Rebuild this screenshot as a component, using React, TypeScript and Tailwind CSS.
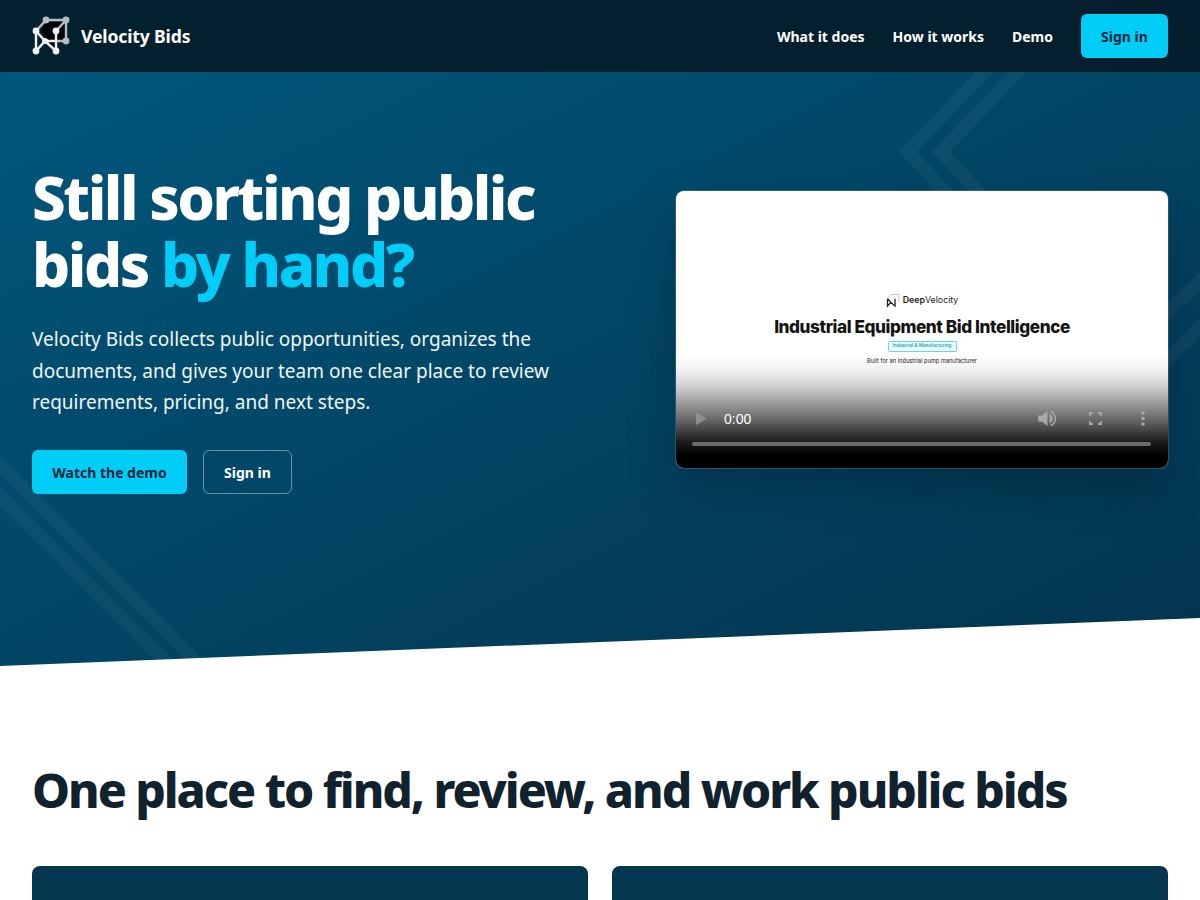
import React from "react";

const font = { fontFamily: '"Noto Sans", sans-serif' };

function Logo() {
  return (
    <svg width="40" height="40" viewBox="0 0 40 40" className="shrink-0">
      <path d="M13 6H33V25H24V35L13 26L10 14Z" fill="#000" />
      <g stroke="#b4bcc0" strokeWidth="2.4" fill="none">
        <path d="M14 4H34V25H24M4 15L14 4M34 4L24 15" />
      </g>
      <g stroke="#eef2f4" strokeWidth="2.4" fill="none">
        <path d="M4 15V35L13 25L24 35V15M4 15L13 25M13 25H24" />
      </g>
      <g fill="#b4bcc0">
        <circle cx="14" cy="4" r="3.4" />
        <circle cx="34" cy="4" r="3.4" />
        <circle cx="34" cy="25" r="3.4" />
      </g>
      <g fill="#eef2f4">
        <circle cx="4" cy="15" r="3.4" />
        <circle cx="24" cy="15" r="3.4" />
        <circle cx="13" cy="25" r="3" />
        <circle cx="4" cy="35" r="3.4" />
        <circle cx="24" cy="35" r="3.4" />
      </g>
    </svg>
  );
}

function MiniLogo() {
  return (
    <svg width="15" height="15" viewBox="0 0 40 40" className="shrink-0">
      <g stroke="#c4c4c4" strokeWidth="2.5" fill="none">
        <path d="M14 4H34V25M4 15L14 4" />
      </g>
      <g stroke="#222" strokeWidth="3.5" fill="none">
        <path d="M4 15V35L13 25L24 35V15M4 15L13 25" />
      </g>
    </svg>
  );
}

function Decoration() {
  return (
    <svg className="absolute inset-0 w-full h-full pointer-events-none" viewBox="0 0 1200 594" preserveAspectRatio="none">
      <g fill="none" stroke="#ffffff" strokeOpacity="0.045" strokeWidth="13">
        <path d="M992 -8L908 80L1008 186" />
        <path d="M1025 -8L941 80L1041 186" />
        <path d="M-20 373L230 623" />
        <path d="M-20 404L230 654" />
        <path d="M1150 305L1230 226" />
        <path d="M1150 256L1230 181" />
      </g>
    </svg>
  );
}

function VideoMock() {
  return (
    <div className="relative w-[492px] h-[277px] rounded-lg overflow-hidden bg-white ring-1 ring-white/15 shadow-[0_20px_50px_rgba(0,0,0,0.22)]">
      <div className="absolute inset-x-0 top-[102px] flex flex-col items-center">
        <div className="flex items-center gap-[2px] h-[14px]">
          <MiniLogo />
          <span className="text-[8.8px] leading-none text-[#222]" style={{ fontFamily: "Inter, sans-serif" }}>
            <b className="font-semibold">Deep</b>Velocity
          </span>
        </div>
        <div className="mt-[8px] text-[17.2px] leading-[24px] font-extrabold text-[#141414] tracking-[-0.025em] whitespace-nowrap" style={{ fontFamily: "Inter, sans-serif" }}>
          Industrial Equipment Bid Intelligence
        </div>
        <div className="mt-[2px] h-[11px] w-[69px] border border-[#5fd8e8] rounded-[2px] bg-[#eefcff] flex items-center justify-center text-[4.6px] font-semibold text-[#17a8c2] whitespace-nowrap" style={{ fontFamily: "Inter, sans-serif" }}>
          Industrial &amp; Manufacturing
        </div>
        <div className="mt-[4px] text-[5.7px] leading-[9px] text-[#222] whitespace-nowrap" style={{ fontFamily: "Inter, sans-serif" }}>
          Built for an industrial pump manufacturer
        </div>
      </div>
      <div className="absolute inset-x-0 bottom-0 h-[115px] bg-[linear-gradient(to_bottom,rgba(0,0,0,0)_0%,rgba(0,0,0,0.05)_15%,rgba(0,0,0,0.2)_30%,rgba(0,0,0,0.58)_57%,rgba(0,0,0,0.9)_78%,rgba(0,0,0,1)_90%)]" />
      <div className="absolute inset-x-0 bottom-0 h-[56px]">
        <svg className="absolute left-[20px] top-[0px]" width="11" height="13" viewBox="0 0 11 13">
          <path d="M0 0L11 6.5L0 13Z" fill="#8f8f8f" />
        </svg>
        <span className="absolute left-[48px] top-[-1px] text-[14px] leading-[16px] text-white" style={{ fontFamily: '"Liberation Sans", sans-serif' }}>0:00</span>
        <svg className="absolute left-[362px] top-[-2px]" width="18" height="17" viewBox="0 0 18 17">
          <path d="M0 5.5H4L9.5 1V16L4 11.5H0Z" fill="#a8a8a8" />
          <path d="M11.5 3.5A5.5 5.5 0 0 1 11.5 13.5Z" fill="#a8a8a8" />
          <path d="M12.5 1.5A7.5 7.5 0 0 1 12.5 15.5" stroke="#a8a8a8" strokeWidth="1.6" fill="none" />
        </svg>
        <svg className="absolute left-[413px] top-[0px]" width="13" height="13" viewBox="0 0 13 13">
          <path d="M1 4V1H4M9 1H12V4M12 9V12H9M4 12H1V9" stroke="#a8a8a8" strokeWidth="1.8" fill="none" />
        </svg>
        <svg className="absolute left-[465px] top-[-1px]" width="4" height="15" viewBox="0 0 4 15">
          <circle cx="2" cy="2" r="1.8" fill="#a8a8a8" />
          <circle cx="2" cy="7.5" r="1.8" fill="#a8a8a8" />
          <circle cx="2" cy="13" r="1.8" fill="#a8a8a8" />
        </svg>
        <div className="absolute left-[16px] right-[17px] top-[30px] h-[4px] rounded-full bg-[#6b6b6b]" />
      </div>
    </div>
  );
}

export default function App() {
  return (
    <div className="h-[900px] overflow-hidden bg-white" style={font}>
      <header className="h-[72px] flex items-center justify-between px-8 bg-gradient-to-r from-[#03202f] via-[#03202f] to-[#051e2d]">
        <div className="flex items-center gap-[9px]">
          <Logo />
          <span className="text-white font-bold text-[17.6px] tracking-[-0.15px]">Velocity Bids</span>
        </div>
        <nav className="flex items-center gap-7 text-[14px] font-bold text-white">
          <span>What it does</span>
          <span>How it works</span>
          <span>Demo</span>
          <span className="h-[44px] w-[87px] rounded-md bg-[#00cef8] text-[#04263a] flex items-center justify-center">Sign in</span>
        </nav>
      </header>

      <section className="relative h-[594px] bg-gradient-to-br from-[#00577c] to-[#03344e] [clip-path:polygon(0_0,100%_0,100%_546px,0_100%)]">
        <Decoration />
        <div className="relative h-full px-8 pt-[92px] flex items-start justify-between">
          <div className="w-[560px]">
            <h1 className="text-[60px] leading-[67px] font-extrabold text-white tracking-[-2.45px]">
              Still sorting public
              <br />
              bids <span className="text-[#00cef8]">by hand?</span>
            </h1>
            <p className="mt-[26px] text-[19px] leading-[31.5px] text-[#f1f5f7]">
              Velocity Bids collects public opportunities, organizes the documents, and gives your team one clear place to review requirements, pricing, and next steps.
            </p>
            <div className="mt-[31.5px] flex gap-4">
              <span className="h-[44px] w-[155px] rounded-md bg-[#00cef8] text-[#04263a] text-[14px] font-bold flex items-center justify-center">Watch the demo</span>
              <span className="h-[44px] w-[89px] rounded-md border border-white/40 text-white text-[14px] font-bold flex items-center justify-center">Sign in</span>
            </div>
          </div>
          <div className="mt-[27px]">
            <VideoMock />
          </div>
        </div>
      </section>

      <section className="px-8 pt-[91px]">
        <h2 className="text-[48px] leading-[66px] font-extrabold text-[#10222d] tracking-[-2.03px]">
          One place to find, review, and work public bids
        </h2>
        <div className="mt-[43px] grid grid-cols-2 gap-6">
          <div className="h-[300px] rounded-lg bg-[#04364f]" />
          <div className="h-[300px] rounded-lg bg-[#04364f]" />
        </div>
      </section>
    </div>
  );
}
